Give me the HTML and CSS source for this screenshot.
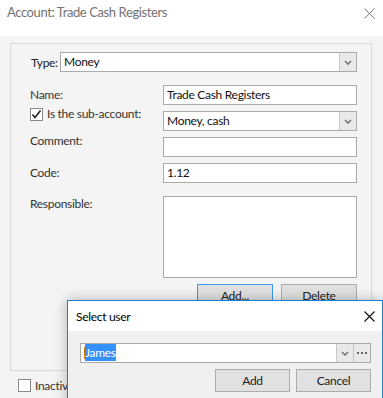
FILE: index.html
```html
<!DOCTYPE html>
<html lang="en">
<head>
  <meta charset="UTF-8">
  <title>Account: Trade Cash Registers</title>
  <link rel="stylesheet" href="styles.css">
</head>
<body>

  <div class="window">
    <div class="titlebar">
      <span class="title">Account: Trade Cash Registers</span>
      <svg class="close" width="11" height="11" viewBox="0 0 11 11"><path d="M0.5 0.5 L10.5 10.5 M10.5 0.5 L0.5 10.5" stroke="#777" stroke-width="1"/></svg>
    </div>

    <div class="content">
      <div class="group">
        <div class="type-row">
          <span class="type-label">Type:</span>
          <div class="combo type-combo">
            <span class="combo-text">Money</span>
            <span class="drop"><svg width="8" height="5" viewBox="0 0 8 5"><path d="M1 1 L4 4 L7 1" fill="none" stroke="#777" stroke-width="1.6"/></svg></span>
          </div>
        </div>

        <div class="row name-row">
          <span class="label">Name:</span>
          <div class="field">Trade Cash Registers</div>
        </div>

        <div class="row">
          <label class="label label-check">
            <span class="check on"><svg width="11" height="11" viewBox="0 0 11 11"><path d="M1.5 5.5 L4 8.5 L9.5 1.5" fill="none" stroke="#222" stroke-width="1.6"/></svg></span>
            Is the sub-account:
          </label>
          <div class="combo field-combo">
            <span class="combo-text">Money, cash</span>
            <span class="drop"><svg width="8" height="5" viewBox="0 0 8 5"><path d="M1 1 L4 4 L7 1" fill="none" stroke="#777" stroke-width="1.6"/></svg></span>
          </div>
        </div>

        <div class="row">
          <span class="label label-up">Comment:</span>
          <div class="field"></div>
        </div>

        <div class="row">
          <span class="label">Code:</span>
          <div class="field">1.12</div>
        </div>

        <div class="row resp-row">
          <span class="label label-top">Responsible:</span>
          <div class="field list"></div>
        </div>

        <div class="group-buttons">
          <button class="btn focused">Add...</button>
          <button class="btn">Delete</button>
        </div>
      </div>

      <label class="inactive">
        <span class="check"></span>
        Inactive
      </label>
    </div>

    <div class="dialog">
      <div class="dialog-title">
        <span>Select user</span>
        <svg width="11" height="11" viewBox="0 0 11 11"><path d="M0.5 0.5 L10.5 10.5 M10.5 0.5 L0.5 10.5" stroke="#111" stroke-width="1.1"/></svg>
      </div>
      <div class="dialog-body">
        <div class="combo user-combo">
          <span class="combo-text"><span class="caret"></span><span class="selected">James</span></span>
          <span class="drop"><svg width="8" height="5" viewBox="0 0 8 5"><path d="M1 1 L4 4 L7 1" fill="none" stroke="#777" stroke-width="1.6"/></svg></span>
          <span class="drop"><svg width="10" height="2" viewBox="0 0 10 2"><rect x="0" y="0" width="2" height="2" fill="#666"/><rect x="4" y="0" width="2" height="2" fill="#666"/><rect x="8" y="0" width="2" height="2" fill="#666"/></svg></span>
        </div>
        <div class="dialog-buttons">
          <button class="btn">Add</button>
          <button class="btn">Cancel</button>
        </div>
      </div>
    </div>
  </div>

</body>
</html>
```

FILE: styles.css
```css
body {
  margin: 0;
  padding: 0;
  font-family: Lato, "Noto Sans", sans-serif;
  font-size: 12px;
  letter-spacing: -0.3px;
  color: #222;
  background-color: #f4f4f4;
  overflow: hidden;
}

.window {
  position: relative;
  width: 383px;
  height: 398px;
  overflow: hidden;
  background-color: #f4f4f4;
}

/* Window title */
.titlebar {
  height: 36px;
  box-sizing: border-box;
  background-color: #fff;
  display: flex;
  justify-content: space-between;
  align-items: flex-start;
  padding: 4px 8px 0 7px;
}

.title {
  font-size: 13px;
  letter-spacing: -0.4px;
  color: #737373;
}

.close {
  margin-top: 4px;
}

.content {
  padding: 7px 11px 0 10px;
}

/* Group box */
.group {
  height: 328px;
  box-sizing: border-box;
  border: 1px solid #dadada;
  padding: 8px 14px 0 19px;
}

.type-row {
  display: flex;
  align-items: center;
  height: 20px;
}

.type-label {
  margin-left: 1px;
  width: 29px;
}

.combo {
  display: flex;
  height: 20px;
  box-sizing: border-box;
  border: 1px solid #ababab;
  background-color: #fff;
}

.type-combo {
  flex: 1;
}

.combo-text {
  flex: 1;
  padding-left: 3px;
  line-height: 18px;
  color: #111;
}

.drop {
  width: 16px;
  border-left: 1px solid #c8c8c8;
  background-color: #e9e9e9;
  display: flex;
  align-items: center;
  justify-content: center;
}

.row {
  display: flex;
  align-items: flex-start;
  margin-top: 6px;
}

.name-row {
  margin-top: 13px;
}

.resp-row {
  margin-top: 13px;
}

.label {
  width: 133px;
  line-height: 16px;
  padding-top: 2px;
  color: #333;
}

.label-up {
  padding-top: 0;
  margin-top: -4px;
}

.label-top {
  padding-top: 0;
}

.label-check {
  display: flex;
  align-items: center;
  padding-top: 0;
  margin-top: -5px;
}

.check {
  width: 13px;
  height: 13px;
  box-sizing: border-box;
  border: 1px solid #8a8a8a;
  background-color: #fff;
  margin-right: 4px;
  display: flex;
  align-items: center;
  justify-content: center;
}

.field {
  width: 194px;
  height: 20px;
  box-sizing: border-box;
  border: 1px solid #ababab;
  background-color: #fff;
  padding-left: 3px;
  line-height: 18px;
  color: #111;
}

.field-combo {
  width: 194px;
}

.list {
  height: 82px;
}

.group-buttons {
  display: flex;
  justify-content: flex-end;
  gap: 8px;
  margin-top: 6px;
}

.btn {
  width: 76px;
  height: 23px;
  box-sizing: border-box;
  border: 1px solid #adadad;
  background-color: #e1e1e1;
  font-family: inherit;
  font-size: 12px;
  letter-spacing: inherit;
  color: #222;
  padding: 0;
}

.btn.focused {
  border-color: #3c9af0;
}

.inactive {
  display: flex;
  align-items: center;
  margin: 7px 0 0 8px;
  color: #333;
}

/* Modal dialog on top of the form */
.dialog {
  position: absolute;
  left: 67px;
  top: 300px;
  width: 316px;
  height: 110px;
  box-sizing: border-box;
  border: 1px solid #1a80d5;
  background-color: #f0f0f0;
  box-shadow: 0 0 12px rgba(0, 0, 0, 0.28);
}

.dialog-title {
  height: 30px;
  background-color: #fff;
  display: flex;
  justify-content: space-between;
  align-items: center;
  padding: 0 7px 0 8px;
  color: #000;
}

.dialog-body {
  padding: 12px 11px 0 12px;
}

.user-combo {
  width: 291px;
}

.caret {
  display: inline-block;
  width: 1px;
  height: 12px;
  background-color: #e07000;
  vertical-align: -2px;
}

.selected {
  background-color: #3390ff;
  color: #fff;
  padding: 1px 0;
}

.dialog-buttons {
  display: flex;
  justify-content: flex-end;
  gap: 6px;
  margin-top: 6px;
}

.dialog-buttons .btn {
  width: 75px;
}
```
